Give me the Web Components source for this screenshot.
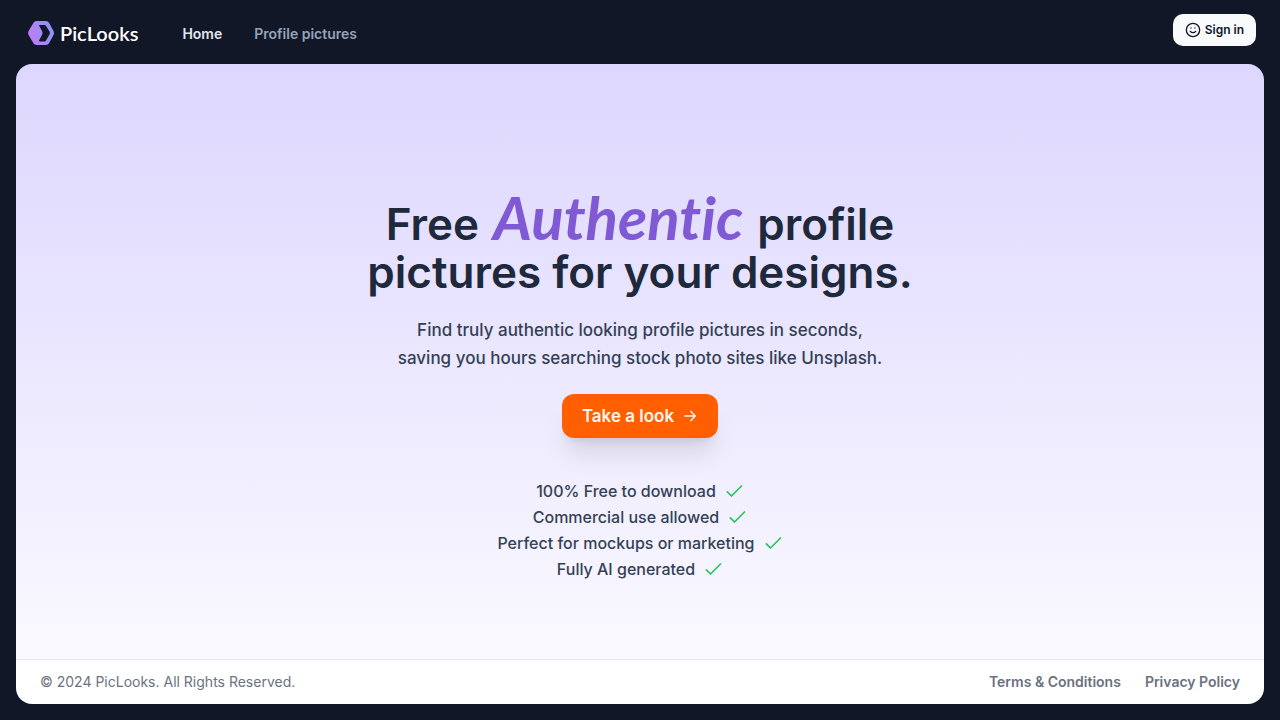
<!DOCTYPE html>
<html lang="en">
<head>
<meta charset="utf-8">
<meta name="viewport" content="width=device-width, initial-scale=1">
<title>PicLooks</title>
<style>
  html { height: 100%; }
  body { margin: 0; min-height: 100%; display: flex; background: #111726; font-family: Inter, "Liberation Sans", sans-serif; }
</style>
</head>
<body>
<pl-app></pl-app>
<script>
const define = (name, html) => {
  const template = document.createElement('template');
  template.innerHTML = html;
  customElements.define(name, class extends HTMLElement {
    constructor() {
      super();
      this.attachShadow({ mode: 'open' }).append(template.content.cloneNode(true));
    }
  });
};

define('pl-logo', `
<style>
  :host { display: block; }
  a { display: flex; align-items: center; gap: 6px; color: #fff; text-decoration: none; font: 600 20px/24px Lato, sans-serif; }
  svg { display: block; width: 26px; height: 24px; }
</style>
<a href="#home">
  <svg viewBox="0 0 26 24" aria-hidden="true">
    <defs><linearGradient id="g" x1="0" y1="0.65" x2="1" y2="0.35"><stop offset="0" stop-color="#c07cf3"/><stop offset="1" stop-color="#8795f5"/></linearGradient></defs>
    <path fill="url(#g)" fill-rule="evenodd" d="M8.500 0H18Q20 0 21 1.700L25.500 10Q26.500 12 25.500 14L21 22.300Q20 24 18 24H8.500Q6.500 24 5.500 22.300L.6 14Q-.4 12 .6 10L5.500 1.700Q6.500 0 8.500 0ZM11 4.500L14 10Q15 12 14 14L11 19.500Q11 20.500 12 20.500H16.500Q17.500 20.500 18 19.600L21.500 13.500Q22.200 12 21.500 10.500L18 4.900Q17.500 4 16.500 4H12Q11 4 11 4.500Z"/>
  </svg>
  <span>PicLooks</span>
</a>`);

define('pl-nav-link', `
<style>
  :host { display: block; color: #94a3b8; }
  :host([current]) { color: #e2e8f0; }
  ::slotted(a) { color: inherit; text-decoration: none; font-size: 14px; line-height: 20px; font-weight: 600; }
</style>
<slot></slot>`);

define('pl-sign-in', `
<style>
  :host { display: block; }
  button { display: flex; align-items: center; gap: 4px; height: 32px; padding: 0 12px; border: 0; border-radius: 10px; background: #f8fafc; color: #0f172a; font: 600 12px/16px Inter, sans-serif; cursor: pointer; }
  svg { width: 16px; height: 16px; fill: none; stroke: currentColor; stroke-width: 2; stroke-linecap: round; stroke-linejoin: round; }
</style>
<button type="button">
  <svg viewBox="0 0 24 24" aria-hidden="true"><circle cx="12" cy="12" r="10"/><path d="M8 14s1.500 2 4 2 4-2 4-2M9 9h.01M15 9h.01"/></svg>
  <slot></slot>
</button>`);

define('pl-header', `
<style>
  :host { display: block; }
  header { display: flex; align-items: center; height: 64px; padding: 0 24px 0 28px; }
  nav { display: flex; gap: 32px; margin-left: 44px; padding-top: 2px; }
  pl-logo { padding-top: 2px; }
  pl-sign-in { margin-left: auto; padding-bottom: 4px; }
</style>
<header>
  <pl-logo></pl-logo>
  <nav>
    <pl-nav-link current><a href="#home">Home</a></pl-nav-link>
    <pl-nav-link><a href="#pictures">Profile pictures</a></pl-nav-link>
  </nav>
  <pl-sign-in>Sign in</pl-sign-in>
</header>`);

define('pl-cta', `
<style>
  :host { display: block; }
  button { display: flex; align-items: center; gap: 8px; height: 44px; padding: 0 20px; border: 0; border-radius: 12px; background: #ff5f00; color: #fff7ed; font: 600 17px/24px Inter, sans-serif; cursor: pointer; box-shadow: 0 20px 25px -5px rgb(0 0 0 / .1), 0 8px 10px -6px rgb(0 0 0 / .1); }
  svg { width: 16px; height: 16px; fill: none; stroke: currentColor; stroke-width: 2; stroke-linecap: round; stroke-linejoin: round; }
</style>
<button type="button"><slot></slot>
  <svg viewBox="0 0 24 24" aria-hidden="true"><path d="M4 12h16M13 5l7 7-7 7"/></svg>
</button>`);

define('pl-benefit', `
<style>
  :host { display: flex; align-items: center; justify-content: center; gap: 8px; color: #334155; font-size: 16px; line-height: 26px; font-weight: 500; }
  svg { width: 20px; height: 20px; fill: none; stroke: #22c55e; stroke-width: 2; stroke-linecap: round; stroke-linejoin: round; }
</style>
<slot></slot>
<svg viewBox="0 0 24 24" aria-hidden="true"><path d="M4 13l5 5L21 6"/></svg>`);

define('pl-hero', `
<style>
  :host { flex: 1; display: flex; flex-direction: column; align-items: center; justify-content: center; box-sizing: border-box; padding: 58px 24px 0; text-align: center; background: linear-gradient(#ddd6fe, #faf9ff); }
  h1 { margin: 0; color: #1e293b; font-size: 44px; line-height: 48px; font-weight: 600; }
  .line { display: flex; justify-content: center; align-items: baseline; gap: 14px; height: 48px; }
  em { color: #805ad5; font: italic 700 60px/32px Lato, sans-serif; font-variant-ligatures: none; }
  p { margin: 20px 0 22px; color: #334155; font-size: 17px; line-height: 28px; font-weight: 500; }
  .benefits { margin-top: 40px; }
</style>
<h1><span class="line"><span>Free</span> <em>Authentic</em> <span>profile</span></span><span class="line">pictures for your designs.</span></h1>
<p>Find truly authentic looking profile pictures in seconds,<br>saving you hours searching stock photo sites like Unsplash.</p>
<pl-cta>Take a look</pl-cta>
<div class="benefits">
  <pl-benefit>100% Free to download</pl-benefit>
  <pl-benefit>Commercial use allowed</pl-benefit>
  <pl-benefit>Perfect for mockups or marketing</pl-benefit>
  <pl-benefit>Fully AI generated</pl-benefit>
</div>`);

define('pl-footer', `
<style>
  :host { display: block; }
  footer { display: flex; align-items: center; justify-content: space-between; padding: 12px 24px; border-top: 1px solid #e2e8f0; background: #fff; color: #6b7280; font-size: 14px; line-height: 20px; }
  nav { display: flex; gap: 24px; }
  a { color: inherit; text-decoration: none; font-weight: 600; }
</style>
<footer>
  <span>© 2024 PicLooks. All Rights Reserved.</span>
  <nav><a href="#terms">Terms &amp; Conditions</a><a href="#privacy">Privacy Policy</a></nav>
</footer>`);

define('pl-app', `
<style>
  :host { flex: 1; display: flex; flex-direction: column; }
  main { flex: 1; display: flex; flex-direction: column; margin: 0 16px 16px; border-radius: 16px; overflow: hidden; }
</style>
<pl-header></pl-header>
<main><pl-hero></pl-hero><pl-footer></pl-footer></main>`);
</script>
</body>
</html>
